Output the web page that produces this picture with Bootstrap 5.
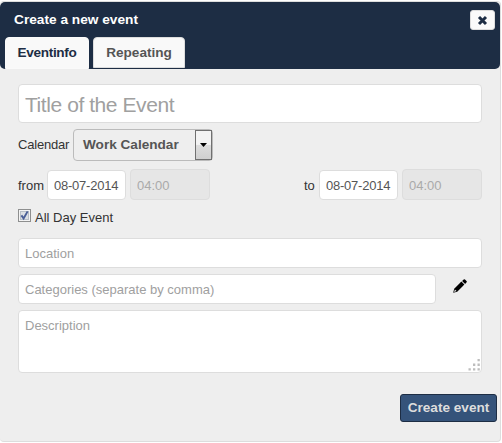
<!DOCTYPE html>
<html lang="en">
<head>
<meta charset="utf-8">
<meta name="viewport" content="width=device-width, initial-scale=1">
<title>Create a new event</title>
<link href="https://cdn.jsdelivr.net/npm/bootstrap@5.3.0/dist/css/bootstrap.min.css" rel="stylesheet">
<style>
body{font:13px/18px "Liberation Sans",Arial,sans-serif;color:#333;background:#fff;overflow:hidden}
.event-dialog{width:501px;height:441px;margin-top:1px;background:#eee;border:1px solid #ddd;border-left:0;border-radius:4px}
.event-head{height:67px;background:#1d2d44;border-radius:5px;color:#fff;padding:8px 5px 0 5px}
.event-title{font-size:13.7px;line-height:20px;font-weight:700;margin-left:9px}
.close-btn{width:25px;height:20px;background:#fafafa;border:1px solid #ddd;border-radius:3px}
.event-tabs{margin-top:7px;gap:4px;border:0}
.event-tabs .nav-link{height:32px;padding:0;border:1px solid #ddd;border-radius:4px 4px 0 0;background:#f9f9f9;color:#555;font-size:13.6px;line-height:29px;font-weight:700;text-align:center;margin:0}
.event-tabs .nav-link.active{background:#f9f9f9;color:#1d2d44;border-color:#fafafa;letter-spacing:-.3px}
.tab-info{width:84px}
.tab-repeat{width:92px}
.event-tabs .tab-repeat{height:31px}
.event-body{padding:15px 18px 0}
.form-control.field{height:30px;min-height:0;padding:0 6px;border:1px solid #ddd;border-radius:4px;background:#fff;font-size:13px;line-height:18px;color:#333}
.form-control.field::placeholder{color:#a0a0a0;opacity:1}
.form-control.field.field-title{height:39px;padding-top:3px;font-size:21px;line-height:26px;letter-spacing:-.43px}
.form-control.field.date{width:79px;color:#555;letter-spacing:-.23px}
.form-control.field.time{width:80px;height:31px;padding-top:1px;background:#e6e6e6;color:#aaa}
.cal-row{margin-top:6px}
.cal-label{width:55px;letter-spacing:-.2px}
.picker{width:140px;height:32px;border:1px solid #bbb;border-radius:4px;color:#555;font-size:13.6px;font-weight:700;padding-left:9px}
.picker-arrow{width:17px;height:30px;border:1px solid #707070;background:linear-gradient(#f3f3f3 48%,#ddd 50%,#cfcfcf)}
.time-row{margin-top:8px;gap:4px}
.from-label{width:25px;line-height:29px}
.to-label{width:11px;line-height:29px}
.all-day{margin-top:8px;height:15px;gap:4px}
.all-day svg{margin-top:1px}
.all-day span{line-height:20px}
.form-control.field.place{margin-top:15px}
.cat-row{margin:6px 0}
.form-control.field.cats{width:418px}
.pencil{margin:5px 0 0 17px}
.form-control.field.notes{height:63px;padding-top:6px;resize:none}
.grip{right:2px;bottom:2px}
.create-row{margin:21px 3px 0 0}
.create-btn{width:97px;height:28px;background:#35537a;border:1px solid #1d2d44;border-radius:3px;color:#ddd;font-weight:700;font-size:13.6px;line-height:18px}
</style>
<script src="https://cdn.jsdelivr.net/npm/bootstrap@5.3.0/dist/js/bootstrap.bundle.min.js"></script>
</head>
<body>
<div class="event-dialog">
  <div class="event-head">
    <div class="d-flex justify-content-between">
      <div class="event-title">Create a new event</div>
      <button class="btn close-btn p-0 d-flex align-items-center justify-content-center" aria-label="Close"><svg width="11" height="11" viewBox="0 0 11 11"><path d="M2 2l7 7M9 2L2 9" stroke="#1d2d44" stroke-width="3"/></svg></button>
    </div>
    <div class="nav nav-tabs event-tabs">
      <a class="nav-link active tab-info">Eventinfo</a>
      <a class="nav-link tab-repeat">Repeating</a>
    </div>
  </div>
  <div class="event-body">
    <input class="form-control field field-title" placeholder="Title of the Event">
    <div class="d-flex align-items-center cal-row">
      <span class="cal-label">Calendar</span>
      <div class="picker d-flex align-items-center justify-content-between"><span>Work Calendar</span><span class="picker-arrow d-flex align-items-center justify-content-center"><svg width="7" height="4" viewBox="0 0 7 4"><path d="M0 0h7L3.5 4z"/></svg></span></div>
    </div>
    <div class="d-flex align-items-end time-row">
      <span class="from-label">from</span>
      <input class="form-control field date" value="08-07-2014">
      <input class="form-control field time" value="04:00" disabled>
      <span class="to-label ms-auto">to</span>
      <input class="form-control field date" value="08-07-2014">
      <input class="form-control field time" value="04:00" disabled>
    </div>
    <label class="d-flex all-day">
      <svg width="13" height="13" viewBox="0 0 13 13"><rect x=".5" y=".5" width="12" height="12" fill="#f4f4f4" stroke="#8e8f8f"/><rect x="2.5" y="2.5" width="8" height="8" fill="#dce0e4" stroke="#b8bfc7"/><path d="M3.4 6.4l2.2 3 4-7" fill="none" stroke="#4a5f97" stroke-width="1.9"/></svg>
      <span>All Day Event</span>
    </label>
    <input class="form-control field place" placeholder="Location">
    <div class="d-flex cat-row">
      <input class="form-control field cats" placeholder="Categories (separate by comma)">
      <svg class="pencil" width="14" height="14" viewBox="0 0 14 14"><path d="M.2 13.8L1.2 9.8 8.4 2.6l3 3-7.2 7.2z"/><path d="M9.1 1.9L10.7.5q.6-.5 1.3.1l1.5 1.5q.6.6.1 1.2l-1.5 1.6z"/><path d="M1.1 12.9l.8-2.4 1.6 1.6z" fill="#eee"/></svg>
    </div>
    <div class="position-relative">
      <textarea class="form-control field notes" placeholder="Description"></textarea>
      <svg class="grip position-absolute" width="12" height="12" viewBox="0 0 12 12" fill="#bdbdbd"><path d="M9.5 0h2.3v2.3H9.5zM5 4.6h2.3v2.3H5zM9.5 4.6h2.3v2.3H9.5zM.5 9.2h2.3v2.3H.5zM5 9.2h2.3v2.3H5zM9.5 9.2h2.3v2.3H9.5z"/></svg>
    </div>
  </div>
  <div class="d-flex justify-content-end create-row"><button class="btn create-btn p-0">Create event</button></div>
</div>
</body>
</html>
